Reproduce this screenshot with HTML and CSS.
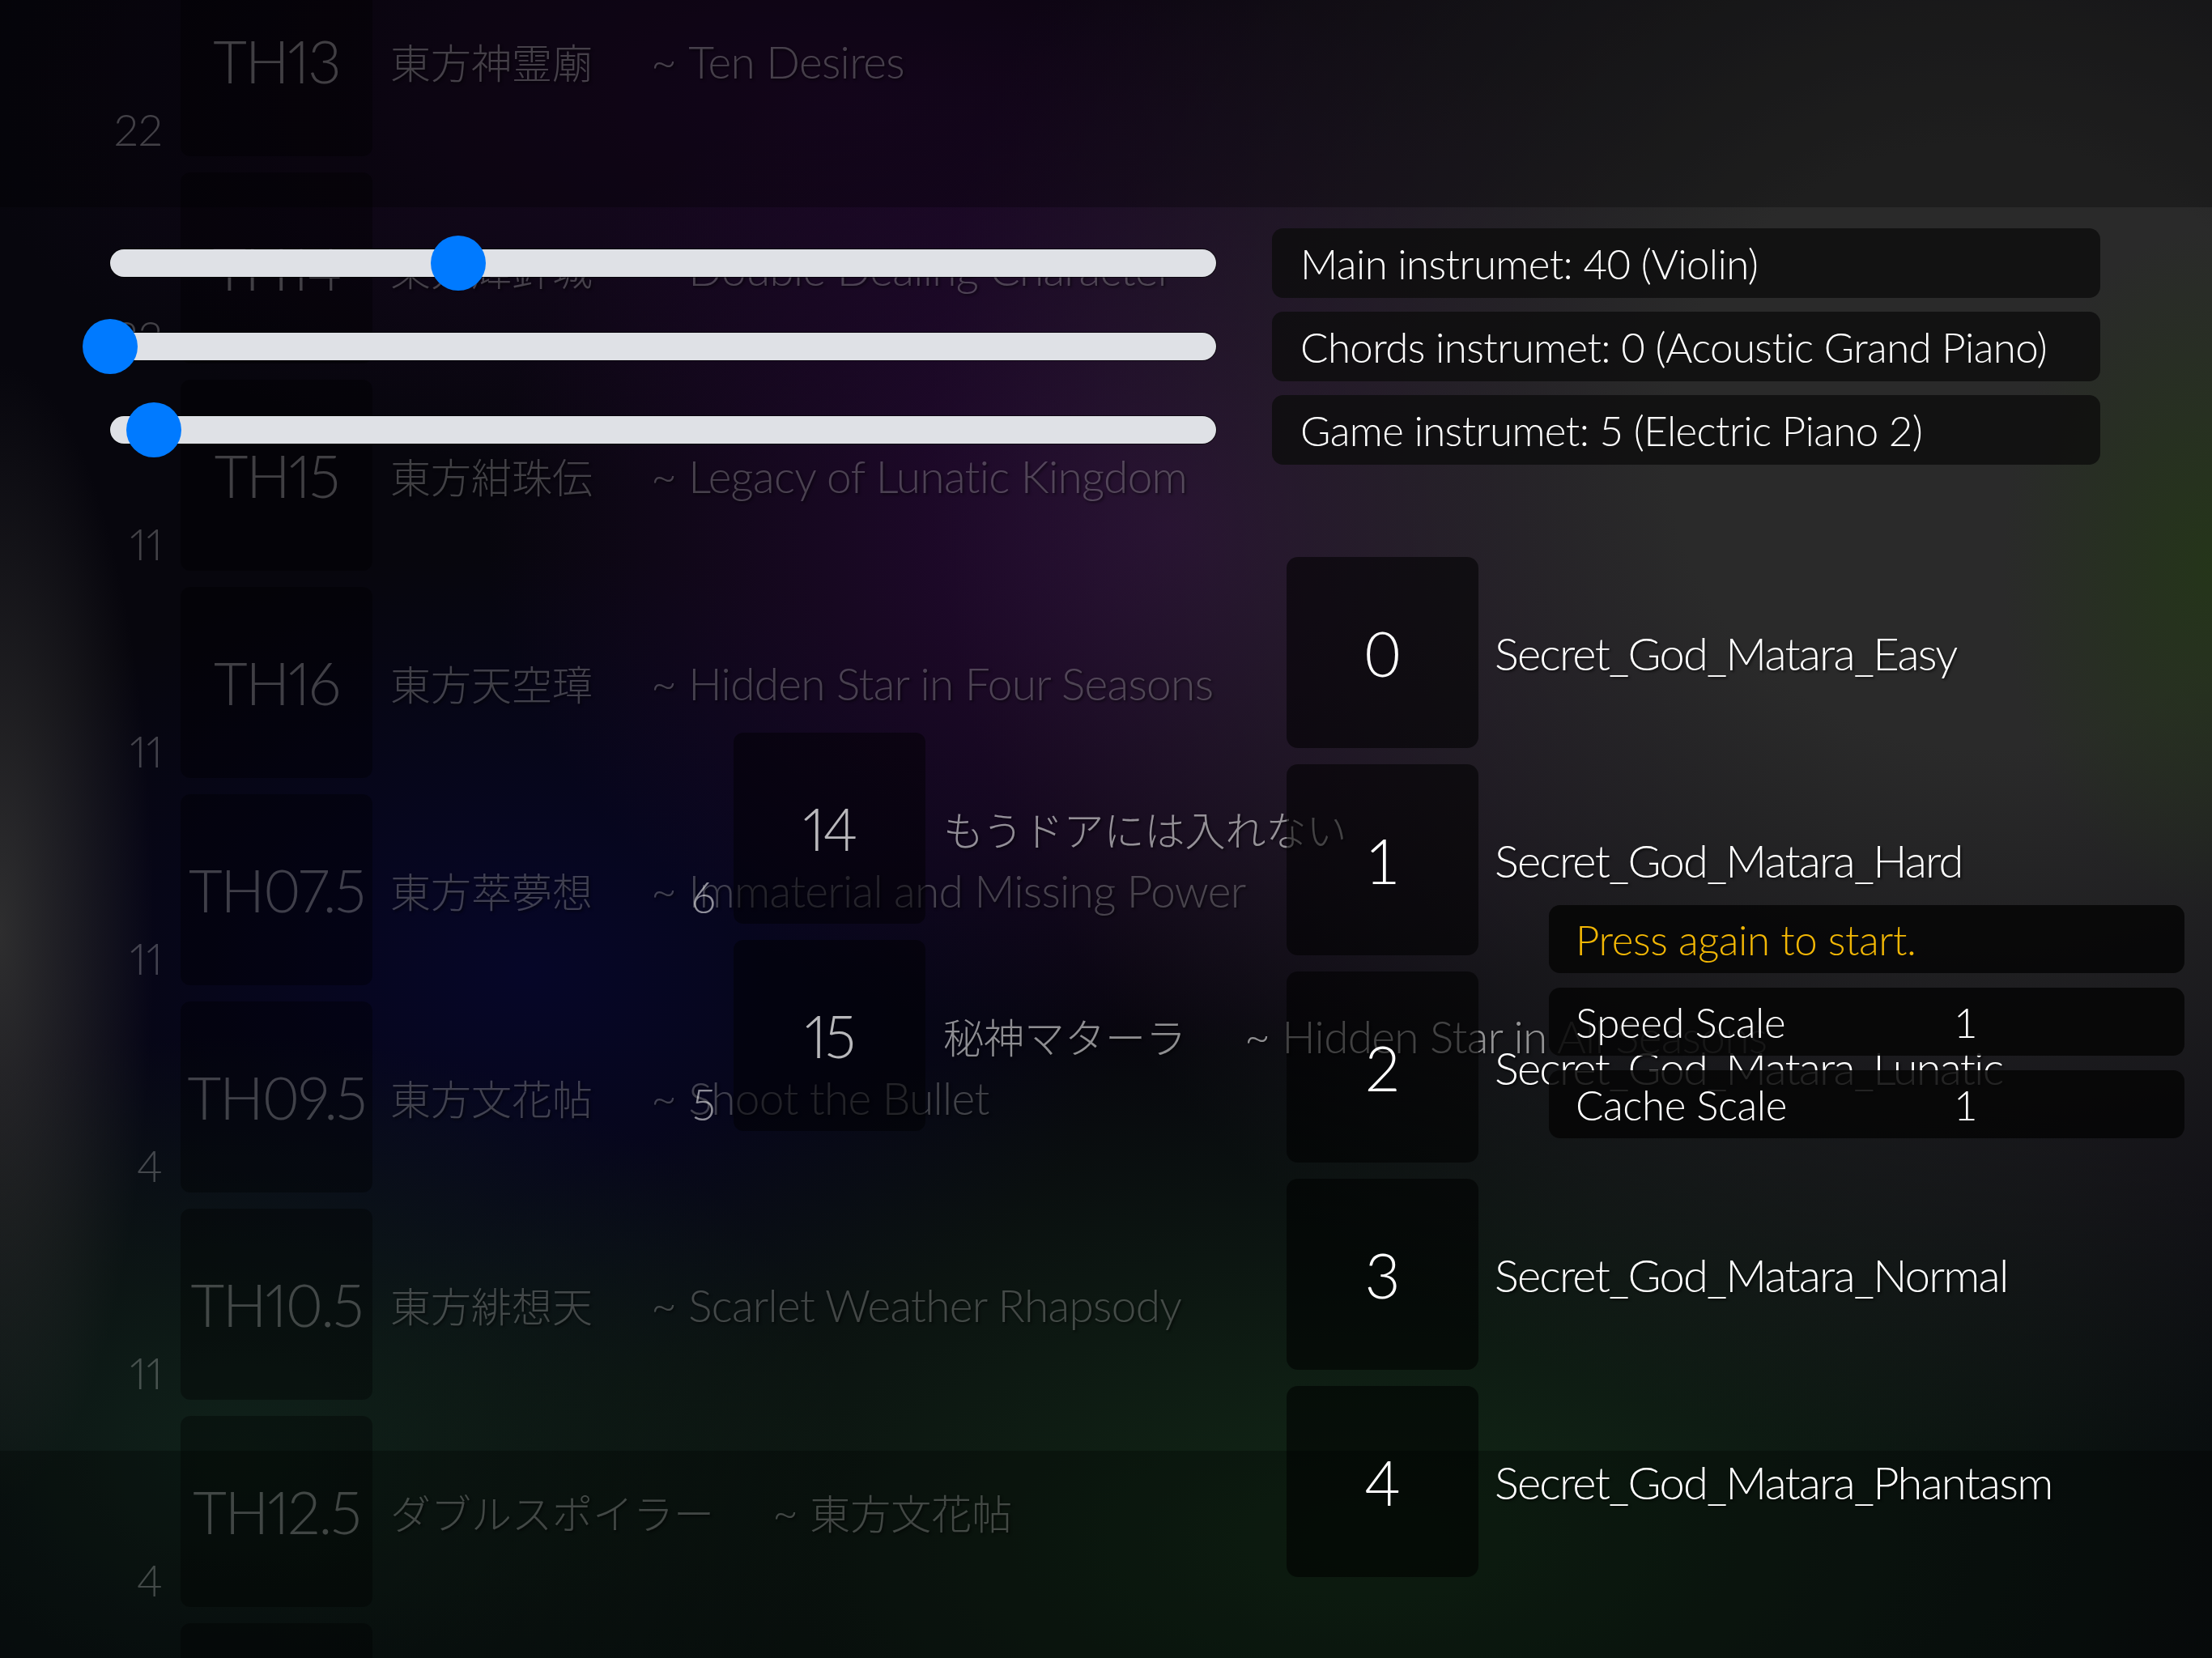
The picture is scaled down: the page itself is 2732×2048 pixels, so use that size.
FILE: index.html
```html
<!DOCTYPE html>
<html lang="ja">
<head>
    <meta charset="UTF-8">
    <meta name="viewport" content="width=device-width, initial-scale=1.0">
    <title>Song Select</title>
    <link rel="stylesheet" href="styles.css">
</head>
<body>
    <div class="screen">
        <div class="band band-top"></div>
        <div class="band band-bottom"></div>

        <!-- game list, scrolled behind everything -->
        <ol class="song-list song-list-back">
            <li class="song">
                <span class="song-count">22</span>
                <span class="song-tile">TH13</span>
                <span class="song-title"><span class="jp">東方神霊廟</span><span class="tilde">~</span>Ten Desires</span>
            </li>
            <li class="song">
                <span class="song-count">22</span>
                <span class="song-tile">TH14</span>
                <span class="song-title"><span class="jp">東方輝針城</span><span class="tilde">~</span>Double Dealing Character</span>
            </li>
            <li class="song">
                <span class="song-count">11</span>
                <span class="song-tile">TH15</span>
                <span class="song-title"><span class="jp">東方紺珠伝</span><span class="tilde">~</span>Legacy of Lunatic Kingdom</span>
            </li>
            <li class="song">
                <span class="song-count">11</span>
                <span class="song-tile">TH16</span>
                <span class="song-title"><span class="jp">東方天空璋</span><span class="tilde">~</span>Hidden Star in Four Seasons</span>
            </li>
            <li class="song">
                <span class="song-count">11</span>
                <span class="song-tile">TH07.5</span>
                <span class="song-title"><span class="jp">東方萃夢想</span><span class="tilde">~</span>Immaterial and Missing Power</span>
            </li>
            <li class="song">
                <span class="song-count">4</span>
                <span class="song-tile">TH09.5</span>
                <span class="song-title"><span class="jp">東方文花帖</span><span class="tilde">~</span>Shoot the Bullet</span>
            </li>
            <li class="song">
                <span class="song-count">11</span>
                <span class="song-tile">TH10.5</span>
                <span class="song-title"><span class="jp">東方緋想天</span><span class="tilde">~</span>Scarlet Weather Rhapsody</span>
            </li>
            <li class="song">
                <span class="song-count">4</span>
                <span class="song-tile">TH12.5</span>
                <span class="song-title"><span class="jp">ダブルスポイラー</span><span class="tilde">~</span><span class="jp">東方文花帖</span></span>
            </li>
            <li class="song">
                <span class="song-count"></span>
                <span class="song-tile"></span>
                <span class="song-title"></span>
            </li>
        </ol>

        <!-- track list of the picked game -->
        <ol class="song-list song-list-mid">
            <li class="song">
                <span class="song-count">6</span>
                <span class="song-tile">14</span>
                <span class="song-title"><span class="jp">もうドアには入れない</span></span>
            </li>
            <li class="song">
                <span class="song-count">5</span>
                <span class="song-tile">15</span>
                <span class="song-title"><span class="jp">秘神マターラ</span><span class="tilde">~</span>Hidden Star in All Seasons</span>
            </li>
        </ol>

        <!-- levels of the picked track -->
        <ol class="level-list">
            <li class="level"><span class="level-tile">0</span><span class="level-name">Secret_God_Matara_Easy</span></li>
            <li class="level"><span class="level-tile">1</span><span class="level-name">Secret_God_Matara_Hard</span></li>
            <li class="level"><span class="level-tile">2</span><span class="level-name">Secret_God_Matara_Lunatic</span></li>
            <li class="level"><span class="level-tile">3</span><span class="level-name">Secret_God_Matara_Normal</span></li>
            <li class="level"><span class="level-tile">4</span><span class="level-name">Secret_God_Matara_Phantasm</span></li>
        </ol>

        <div class="controls">
            <div class="slider">
                <div class="slider-track"></div>
                <div class="slider-thumb" style="left: 31.496%;"></div>
            </div>
            <div class="label-box">Main instrumet: 40 (Violin)</div>

            <div class="slider">
                <div class="slider-track"></div>
                <div class="slider-thumb" style="left: 0%;"></div>
            </div>
            <div class="label-box">Chords instrumet: 0 (Acoustic Grand Piano)</div>

            <div class="slider">
                <div class="slider-track"></div>
                <div class="slider-thumb" style="left: 3.937%;"></div>
            </div>
            <div class="label-box">Game instrumet: 5 (Electric Piano 2)</div>
        </div>

        <div class="start-panel">
            <div class="panel-box notice">Press again to start.</div>
            <div class="panel-box setting"><span class="setting-name">Speed Scale</span><span>1</span></div>
            <div class="panel-box setting"><span class="setting-name">Cache Scale</span><span>1</span></div>
        </div>
    </div>
</body>
</html>
```

FILE: styles.css
```css
body {
    margin: 0;
    background-color: #07060d;
    font-family: Lato, "Noto Sans CJK JP", sans-serif;
    font-weight: 300;
    color: #ffffff;
}

.screen {
    position: relative;
    width: 2732px;
    height: 2048px;
    overflow: hidden;
    background-color: #07060d;
    background-image:
        radial-gradient(ellipse 190px 700px at 0px 1150px, rgba(50, 50, 50, 0.9), transparent),
        radial-gradient(ellipse 260px 420px at 2732px 700px, rgba(36, 54, 24, 0.9), transparent),
        radial-gradient(ellipse 1300px 1250px at 2450px 550px, rgba(42, 42, 42, 1) 30%, transparent),
        radial-gradient(ellipse 850px 650px at 1450px 650px, rgba(40, 10, 54, 1), transparent),
        radial-gradient(ellipse 1400px 650px at 1700px 1900px, rgba(18, 40, 22, 1), transparent),
        radial-gradient(ellipse 750px 520px at 300px 1800px, rgba(16, 34, 26, 1), transparent),
        radial-gradient(ellipse 750px 520px at 650px 1200px, rgba(6, 6, 40, 1), transparent),
        radial-gradient(ellipse 1100px 500px at 1050px 120px, rgba(26, 8, 36, 1), transparent);
}

.band {
    position: absolute;
    left: 0;
    right: 0;
    height: 256px;
    background-color: rgba(0, 0, 0, 0.28);
}

.band-top {
    top: 0;
}

.band-bottom {
    bottom: 0;
}

/* lists */

.song-list {
    position: absolute;
    margin: 0;
    padding: 0;
    list-style: none;
    display: flex;
    flex-direction: column;
    gap: 20px;
}

.song-list-back {
    left: 0;
    top: -43px;
    color: rgba(255, 255, 255, 0.24);
}

.song-list-mid {
    left: 683px;
    top: 905px;
    color: rgba(255, 255, 255, 0.55);
}

.song {
    display: grid;
    grid-template-columns: 201px 237px auto;
    column-gap: 22px;
    height: 236px;
    align-items: center;
}

.song-count {
    align-self: end;
    margin-bottom: 6px;
    text-align: right;
    font-size: 54px;
    line-height: 1;
    font-variant-numeric: proportional-nums;
}

.song-tile {
    display: flex;
    justify-content: center;
    align-items: center;
    height: 236px;
    border-radius: 12px;
    background-color: rgba(0, 0, 0, 0.35);
    font-size: 72px;
    letter-spacing: -2px;
    font-variant-numeric: proportional-nums;
}

.song-list-mid .song-tile {
    color: rgba(255, 255, 255, 0.72);
    background-color: rgba(0, 0, 0, 0.45);
}

.song-title {
    display: flex;
    align-items: baseline;
    font-size: 55px;
    letter-spacing: -0.7px;
    white-space: nowrap;
    text-shadow: 2px 2px 3px rgba(0, 0, 0, 0.5);
}

.jp {
    font-family: "Noto Sans CJK JP", sans-serif;
    font-size: 50px;
    font-weight: 300;
    letter-spacing: 0;
}

.tilde {
    margin: 0 15px 0 72px;
}

.level-list {
    position: absolute;
    left: 1589px;
    top: 688px;
    margin: 0;
    padding: 0;
    list-style: none;
    display: flex;
    flex-direction: column;
    gap: 20px;
}

.level {
    display: flex;
    align-items: center;
    gap: 20px;
    height: 236px;
}

.level-tile {
    display: flex;
    justify-content: center;
    align-items: center;
    width: 237px;
    height: 236px;
    border-radius: 14px;
    background-color: rgba(0, 0, 0, 0.55);
    font-size: 76px;
}

.level-name {
    font-size: 56px;
    letter-spacing: -1.8px;
    white-space: nowrap;
    text-shadow: 2px 2px 3px rgba(0, 0, 0, 0.6);
}

/* instrument sliders */

.controls {
    position: absolute;
    left: 136px;
    top: 282px;
    display: grid;
    grid-template-columns: 1366px 1023px;
    grid-auto-rows: 86px;
    column-gap: 69px;
    row-gap: 17px;
}

.slider {
    position: relative;
    display: flex;
    align-items: center;
}

.slider-track {
    width: 100%;
    height: 34px;
    border-radius: 17px;
    background-color: #dfe1e6;
    box-shadow: 0 0 0 1px rgba(0, 0, 0, 0.6);
}

.slider-thumb {
    position: absolute;
    top: 50%;
    width: 68px;
    height: 68px;
    border-radius: 50%;
    background-color: #007aff;
    transform: translate(-50%, -50%);
}

.label-box {
    display: flex;
    align-items: center;
    padding-left: 35px;
    border-radius: 14px;
    background-color: rgba(12, 12, 12, 0.8);
    font-size: 51px;
    letter-spacing: -0.6px;
    white-space: nowrap;
}

/* start panel */

.start-panel {
    position: absolute;
    left: 1913px;
    top: 1118px;
    width: 785px;
    display: flex;
    flex-direction: column;
    gap: 18px;
}

.panel-box {
    display: flex;
    align-items: center;
    height: 84px;
    padding-left: 33px;
    border-radius: 14px;
    background-color: rgba(6, 6, 6, 0.88);
    font-size: 51px;
    letter-spacing: -0.4px;
}

.notice {
    color: #f2b705;
}

.setting-name {
    width: 467px;
}
```
